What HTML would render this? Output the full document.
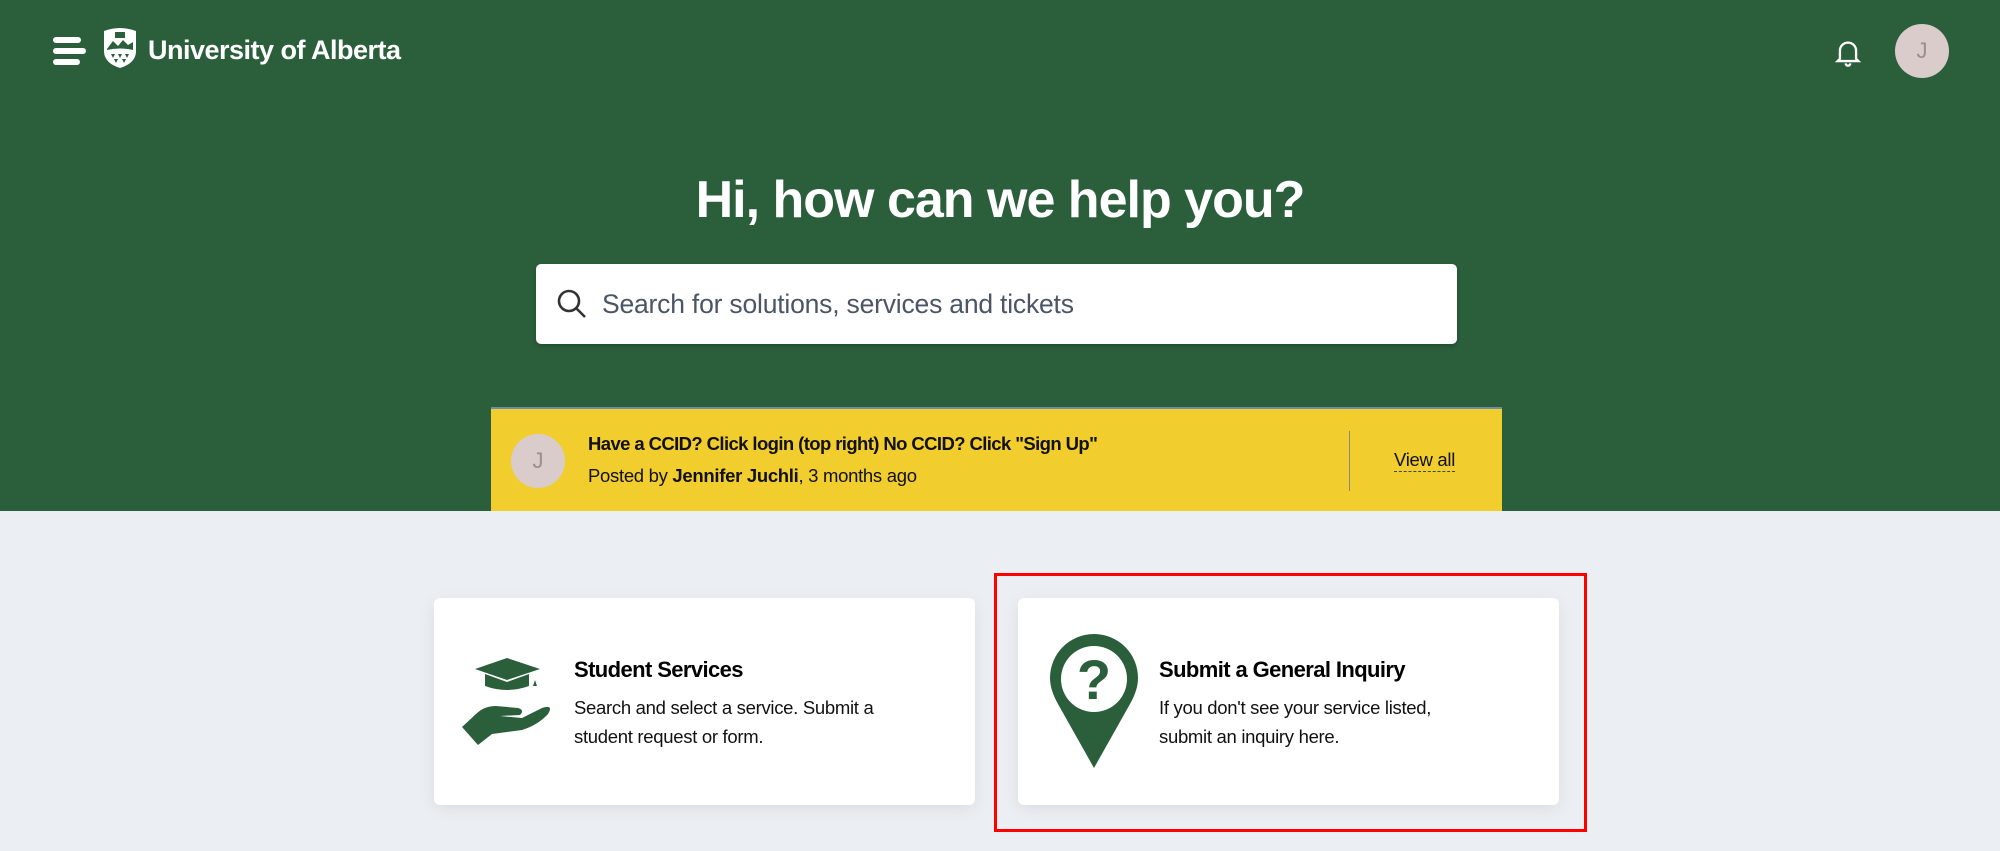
<!DOCTYPE html>
<html><head><meta charset="utf-8"><style>
*{margin:0;padding:0;box-sizing:border-box}
body{width:2000px;height:851px;overflow:hidden;background:#ebeef3;font-family:"Liberation Sans",Arial,sans-serif;position:relative}
.hdr{position:absolute;left:0;top:0;width:2000px;height:511px;background:#2b5e3b}
.abs{position:absolute}
.title{color:#fff;font-weight:bold;font-size:27px;left:148px;top:35px;letter-spacing:-0.5px}
h1{position:absolute;left:0;width:2000px;text-align:center;top:170px;color:#fff;font-size:52px;font-weight:bold;letter-spacing:-1px}
.search{left:536px;top:264px;width:921px;height:80px;background:#fff;border-radius:5px;box-shadow:0 2px 4px rgba(0,0,0,.2)}
.search span{position:absolute;left:66px;top:25px;font-size:26.5px;color:#4a5565;letter-spacing:-0.2px}
.banner{left:491px;top:407px;width:1011px;height:104px;background:#f2cd2e;border-top:2px solid #6b8fa8}
.av{border-radius:50%;background:#d9ccca;color:#9a8f8e;text-align:center;font-size:22px}
.card{background:#fff;border-radius:6px;box-shadow:0 4px 16px rgba(0,0,0,.07);width:541px;height:207px;top:598px}
.ct{font-size:22px;font-weight:bold;color:#000;letter-spacing:-0.6px}
.cd{font-size:18.5px;color:#111;line-height:29px;letter-spacing:-0.3px}
</style></head><body>
<div class="hdr"></div>
<div class="abs" style="left:53px;top:37px">
 <div style="height:6px;background:#fff;border-radius:3px;margin-bottom:5px;width:28px"></div>
 <div style="width:33px;height:6px;background:#fff;border-radius:3px;margin-bottom:5px"></div>
 <div style="width:27px;height:6px;background:#fff;border-radius:3px"></div>
</div>
<svg class="abs" style="left:102px;top:27px" width="36" height="42" viewBox="0 0 36 42"><path d="M2 4 Q18 -2 34 4 L34 24 Q34 36 18 41 Q2 36 2 24 Z" fill="#fff"/><rect x="13" y="5" width="10" height="6" fill="#2b5e3b"/><path d="M5 22 L11 14 L16 19 L21 13 L26 18 L31 15 L31 23 Q18 20 5 23Z" fill="#2b5e3b"/><path d="M9 27h4l-2 4zM16 27h4l-2 4zM23 27h4l-2 4zM12 32h4l-2 4zM20 32h4l-2 4z" fill="#2b5e3b"/></svg>
<div class="abs title">University of Alberta</div>
<svg class="abs" style="left:1834px;top:38px" width="28" height="30" viewBox="0 0 24 26" fill="none" stroke="#fff" stroke-width="2"><path d="M5 18 V11 a7 7 0 0 1 14 0 V18 l2 2 H3z"/><path d="M10 22 a2 2 0 0 0 4 0"/></svg>
<div class="abs av" style="left:1895px;top:24px;width:54px;height:54px;line-height:54px">J</div>
<h1>Hi, how can we help you?</h1>
<div class="abs search"><svg class="abs" style="left:20px;top:24px" width="32" height="32" viewBox="0 0 32 32" fill="none" stroke="#333" stroke-width="2.6"><circle cx="13" cy="13" r="10"/><path d="M20.5 20.5 L29 29"/></svg><span>Search for solutions, services and tickets</span></div>
<div class="abs banner">
 <div class="abs av" style="left:20px;top:25px;width:54px;height:54px;line-height:54px">J</div>
 <div class="abs" style="left:97px;top:24px;font-size:18.5px;font-weight:bold;color:#111;letter-spacing:-0.6px">Have a CCID? Click login (top right) No CCID? Click "Sign Up"</div>
 <div class="abs" style="left:97px;top:56px;font-size:18.5px;color:#111;letter-spacing:-0.3px">Posted by <b style="font-weight:600">Jennifer Juchli</b>, 3 months ago</div>
 <div class="abs" style="left:858px;top:22px;width:1px;height:60px;background:#8a8a7a"></div>
 <div class="abs" style="left:903px;top:40px;font-size:18.5px;color:#111;border-bottom:1px dashed #444;line-height:22px;letter-spacing:-0.3px">View all</div>
</div>
<div class="abs card" style="left:434px">
 <svg class="abs" style="left:28px;top:60px" width="92" height="90" viewBox="0 0 92 90" fill="#2b5e3b"><path d="M13 11 L45 0 L78 11 L45 22 Z"/><path d="M23 16 V28 Q45 36 67 28 V16 L45 24Z"/><path d="M73 12 V22 l-2 6 h4 l-2 -6z"/><path d="M0 69 L14 56 Q22 48 34 48 L56 50 Q63 52 58 57 L38 58 L60 60 L80 50 Q92 46 86 56 Q76 67 60 72 L30 76 L16 87 Z"/></svg>
 <div class="abs ct" style="left:140px;top:59px">Student Services</div>
 <div class="abs cd" style="left:140px;top:95px">Search and select a service. Submit a<br>student request or form.</div>
</div>
<div class="abs" style="left:994px;top:573px;width:593px;height:259px;border:3px solid #f00"></div>
<div class="abs card" style="left:1018px">
 <svg class="abs" style="left:32px;top:36px" width="88" height="134" viewBox="0 0 88 134"><path d="M44 134 L8 70 Q0 56 0 44 A44 44 0 0 1 88 44 Q88 56 80 70 Z" fill="#2b5e3b"/><circle cx="44" cy="45" r="33" fill="#fff"/><text x="44" y="65" text-anchor="middle" font-family="Liberation Sans" font-weight="bold" font-size="56" fill="#2b5e3b">?</text></svg>
 <div class="abs ct" style="left:141px;top:59px">Submit a General Inquiry</div>
 <div class="abs cd" style="left:141px;top:95px">If you don't see your service listed,<br>submit an inquiry here.</div>
</div>
</body></html>
